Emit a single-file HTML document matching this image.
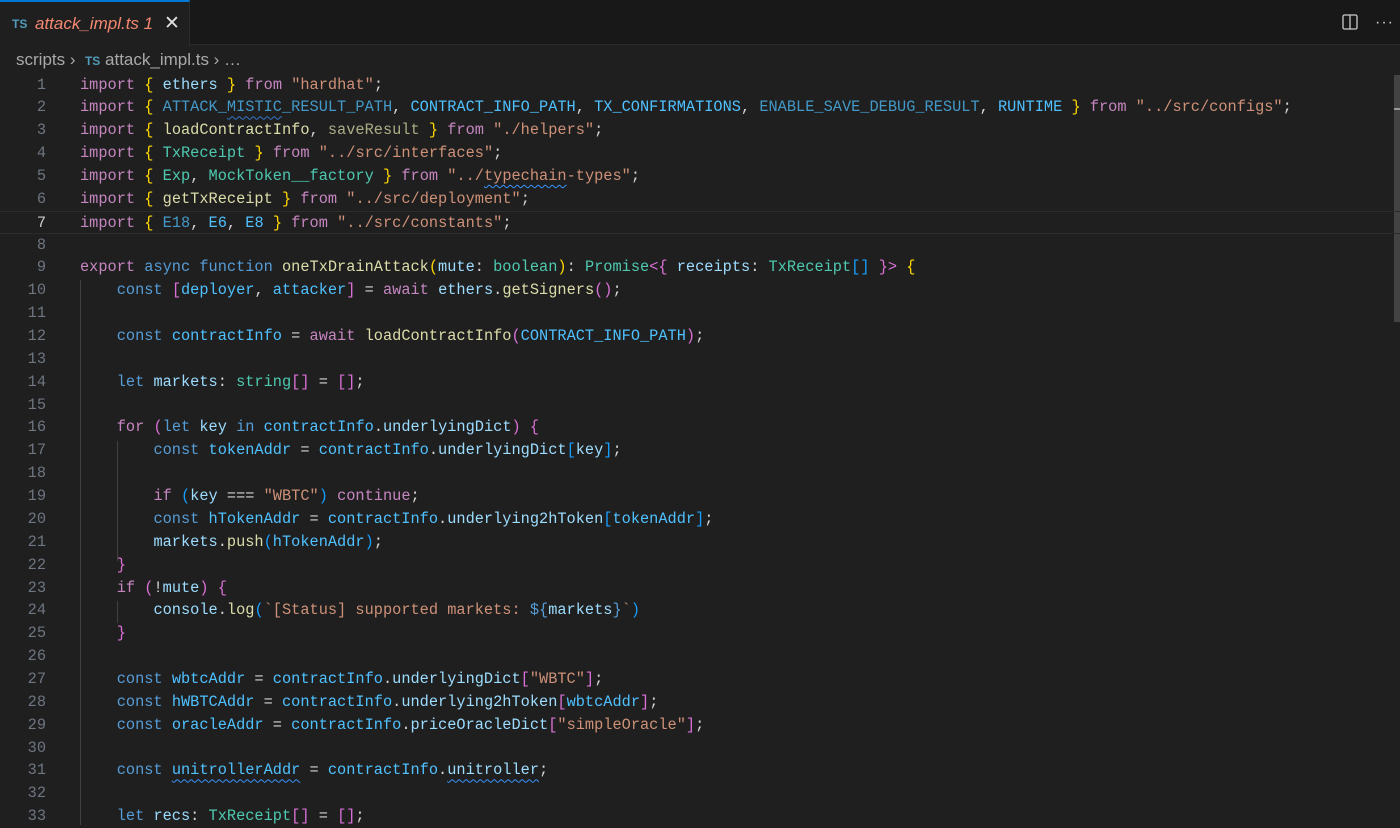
<!DOCTYPE html>
<html><head><meta charset="utf-8"><style>
*{margin:0;padding:0;box-sizing:border-box}
body{width:1400px;height:825px;background:#1f1f1f;overflow:hidden;position:relative;font-family:"Liberation Sans",sans-serif}
#tabbar{position:absolute;left:0;top:0;width:1400px;height:45px;background:#181818;border-bottom:1px solid #2b2b2b}
#tab{position:absolute;left:0;top:0;width:190px;height:46px;background:#1f1f1f;border-top:2px solid #0078d4;border-right:1px solid #2b2b2b}
#tab .ts{position:absolute;left:12px;top:15px;font-size:12px;font-weight:bold;color:#519aba}
#tab .name{position:absolute;left:35px;top:12px;font-size:17px;font-style:italic;color:#f48771}
#tab .x{position:absolute;left:164px;top:10px;font-size:19px;color:#e0e0e0}
#crumbs{position:absolute;left:16px;top:50px;font-size:17px;color:#a9a9a9;white-space:pre}
#crumbs .ts{font-size:12px;font-weight:bold;color:#519aba}
#code{position:absolute;left:0;top:73.6px;width:1400px;font-family:"Liberation Mono",monospace;font-size:15.3px;color:#d4d4d4}
.l{height:22.87px;line-height:22.87px;white-space:pre;position:relative}
.n{position:absolute;left:0;width:46px;text-align:right;color:#6e7681}
.t{position:absolute;left:80px}
.cur{border-top:1px solid #2c2c2c;border-bottom:1px solid #2c2c2c}
.k{color:#c586c0}.s{color:#569cd6}.v{color:#9cdcfe}.c{color:#4fc1ff}.q{color:#ce9178}.f{color:#dcdcaa}.ty{color:#4ec9b0}
.b1{color:#ffd700}.b2{color:#da70d6}.b3{color:#179fff}.d{opacity:.75}
.w{text-decoration:underline wavy #3794ff;text-underline-offset:4px;text-decoration-thickness:1px}
.g{position:absolute;width:1px;background:#404040}
</style></head><body>
<div id="tabbar"><div id="tab"><span class="ts">TS</span><span class="name">attack_impl.ts 1</span><span class="x">✕</span></div>
<svg style="position:absolute;left:1342px;top:14px" width="16" height="16" viewBox="0 0 16 16"><rect x="1" y="1" width="14" height="14" rx="1.5" fill="none" stroke="#ccc" stroke-width="1.3"/><line x1="8" y1="1" x2="8" y2="15" stroke="#ccc" stroke-width="1.3"/></svg>
<span style="position:absolute;left:1375px;top:14px;color:#ccc;font-size:16px;letter-spacing:1px">···</span>
</div>
<div id="crumbs">scripts ›  <span class="ts">TS</span> attack_impl.ts › …</div>
<div class="g" style="left:80px;top:280px;height:545px"></div>
<div class="g" style="left:117px;top:441px;height:120px"></div>
<div class="g" style="left:117px;top:601px;height:22px"></div>
<div style="position:absolute;left:1394px;top:75px;width:6px;height:247px;background:#434343"></div>
<div style="position:absolute;left:1394px;top:108px;width:6px;height:2px;background:#999"></div>
<div id="code">
<div class="l"><span class="n">1</span><span class="t"><span class="k">import</span> <span class="b1">{</span> <span class="v">ethers</span> <span class="b1">}</span> <span class="k">from</span> <span class="q">"hardhat"</span>;</span></div>
<div class="l"><span class="n">2</span><span class="t"><span class="k">import</span> <span class="b1">{</span> <span class="c d">ATTACK_<span class="w">MISTIC</span>_RESULT_PATH</span>, <span class="c">CONTRACT_INFO_PATH</span>, <span class="c">TX_CONFIRMATIONS</span>, <span class="c d">ENABLE_SAVE_DEBUG_RESULT</span>, <span class="c">RUNTIME</span> <span class="b1">}</span> <span class="k">from</span> <span class="q">"../src/configs"</span>;</span></div>
<div class="l"><span class="n">3</span><span class="t"><span class="k">import</span> <span class="b1">{</span> <span class="f">loadContractInfo</span>, <span class="f d">saveResult</span> <span class="b1">}</span> <span class="k">from</span> <span class="q">"./helpers"</span>;</span></div>
<div class="l"><span class="n">4</span><span class="t"><span class="k">import</span> <span class="b1">{</span> <span class="ty">TxReceipt</span> <span class="b1">}</span> <span class="k">from</span> <span class="q">"../src/interfaces"</span>;</span></div>
<div class="l"><span class="n">5</span><span class="t"><span class="k">import</span> <span class="b1">{</span> <span class="ty">Exp</span>, <span class="ty">MockToken__factory</span> <span class="b1">}</span> <span class="k">from</span> <span class="q">"../<span class="w">typechain</span>-types"</span>;</span></div>
<div class="l"><span class="n">6</span><span class="t"><span class="k">import</span> <span class="b1">{</span> <span class="f">getTxReceipt</span> <span class="b1">}</span> <span class="k">from</span> <span class="q">"../src/deployment"</span>;</span></div>
<div class="l cur"><span class="n" style="color:#ccc">7</span><span class="t"><span class="k">import</span> <span class="b1">{</span> <span class="c d">E18</span>, <span class="c">E6</span>, <span class="c">E8</span> <span class="b1">}</span> <span class="k">from</span> <span class="q">"../src/constants"</span>;</span></div>
<div class="l"><span class="n">8</span></div>
<div class="l"><span class="n">9</span><span class="t"><span class="k">export</span> <span class="s">async</span> <span class="s">function</span> <span class="f">oneTxDrainAttack</span><span class="b1">(</span><span class="v">mute</span>: <span class="ty">boolean</span><span class="b1">)</span>: <span class="ty">Promise</span><span class="b2">&lt;{</span> <span class="v">receipts</span>: <span class="ty">TxReceipt</span><span class="b3">[]</span> <span class="b2">}&gt;</span> <span class="b1">{</span></span></div>
<div class="l"><span class="n">10</span><span class="t">    <span class="s">const</span> <span class="b2">[</span><span class="c">deployer</span>, <span class="c">attacker</span><span class="b2">]</span> = <span class="k">await</span> <span class="v">ethers</span>.<span class="f">getSigners</span><span class="b2">()</span>;</span></div>
<div class="l"><span class="n">11</span></div>
<div class="l"><span class="n">12</span><span class="t">    <span class="s">const</span> <span class="c">contractInfo</span> = <span class="k">await</span> <span class="f">loadContractInfo</span><span class="b2">(</span><span class="c">CONTRACT_INFO_PATH</span><span class="b2">)</span>;</span></div>
<div class="l"><span class="n">13</span></div>
<div class="l"><span class="n">14</span><span class="t">    <span class="s">let</span> <span class="v">markets</span>: <span class="ty">string</span><span class="b2">[]</span> = <span class="b2">[]</span>;</span></div>
<div class="l"><span class="n">15</span></div>
<div class="l"><span class="n">16</span><span class="t">    <span class="k">for</span> <span class="b2">(</span><span class="s">let</span> <span class="v">key</span> <span class="s">in</span> <span class="c">contractInfo</span>.<span class="v">underlyingDict</span><span class="b2">)</span> <span class="b2">{</span></span></div>
<div class="l"><span class="n">17</span><span class="t">        <span class="s">const</span> <span class="c">tokenAddr</span> = <span class="c">contractInfo</span>.<span class="v">underlyingDict</span><span class="b3">[</span><span class="v">key</span><span class="b3">]</span>;</span></div>
<div class="l"><span class="n">18</span></div>
<div class="l"><span class="n">19</span><span class="t">        <span class="k">if</span> <span class="b3">(</span><span class="v">key</span> === <span class="q">"WBTC"</span><span class="b3">)</span> <span class="k">continue</span>;</span></div>
<div class="l"><span class="n">20</span><span class="t">        <span class="s">const</span> <span class="c">hTokenAddr</span> = <span class="c">contractInfo</span>.<span class="v">underlying2hToken</span><span class="b3">[</span><span class="c">tokenAddr</span><span class="b3">]</span>;</span></div>
<div class="l"><span class="n">21</span><span class="t">        <span class="v">markets</span>.<span class="f">push</span><span class="b3">(</span><span class="c">hTokenAddr</span><span class="b3">)</span>;</span></div>
<div class="l"><span class="n">22</span><span class="t">    <span class="b2">}</span></span></div>
<div class="l"><span class="n">23</span><span class="t">    <span class="k">if</span> <span class="b2">(</span>!<span class="v">mute</span><span class="b2">)</span> <span class="b2">{</span></span></div>
<div class="l"><span class="n">24</span><span class="t">        <span class="v">console</span>.<span class="f">log</span><span class="b3">(</span><span class="q">`[Status] supported markets: </span><span class="s">${</span><span class="v">markets</span><span class="s">}</span><span class="q">`</span><span class="b3">)</span></span></div>
<div class="l"><span class="n">25</span><span class="t">    <span class="b2">}</span></span></div>
<div class="l"><span class="n">26</span></div>
<div class="l"><span class="n">27</span><span class="t">    <span class="s">const</span> <span class="c">wbtcAddr</span> = <span class="c">contractInfo</span>.<span class="v">underlyingDict</span><span class="b2">[</span><span class="q">"WBTC"</span><span class="b2">]</span>;</span></div>
<div class="l"><span class="n">28</span><span class="t">    <span class="s">const</span> <span class="c">hWBTCAddr</span> = <span class="c">contractInfo</span>.<span class="v">underlying2hToken</span><span class="b2">[</span><span class="c">wbtcAddr</span><span class="b2">]</span>;</span></div>
<div class="l"><span class="n">29</span><span class="t">    <span class="s">const</span> <span class="c">oracleAddr</span> = <span class="c">contractInfo</span>.<span class="v">priceOracleDict</span><span class="b2">[</span><span class="q">"simpleOracle"</span><span class="b2">]</span>;</span></div>
<div class="l"><span class="n">30</span></div>
<div class="l"><span class="n">31</span><span class="t">    <span class="s">const</span> <span class="c w">unitrollerAddr</span> = <span class="c">contractInfo</span>.<span class="v w">unitroller</span>;</span></div>
<div class="l"><span class="n">32</span></div>
<div class="l"><span class="n">33</span><span class="t">    <span class="s">let</span> <span class="v">recs</span>: <span class="ty">TxReceipt</span><span class="b2">[]</span> = <span class="b2">[]</span>;</span></div>
</div>
</body></html>
